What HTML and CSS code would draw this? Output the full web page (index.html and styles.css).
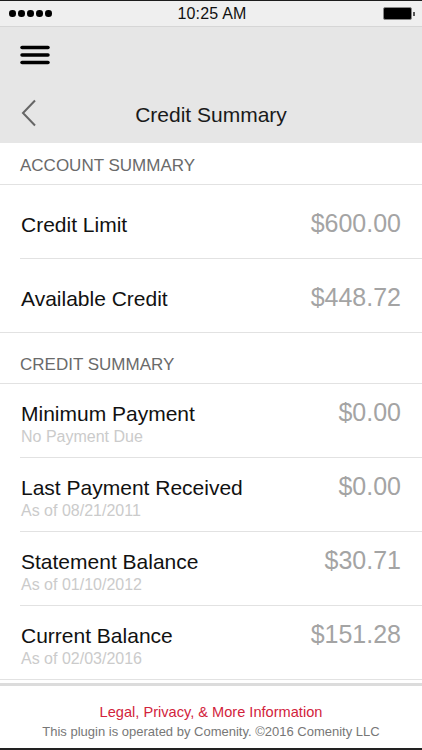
FILE: index.html
```html
<!DOCTYPE html>
<html lang="en">
<head>
    <meta charset="UTF-8">
    <meta name="viewport" content="width=device-width, initial-scale=1.0">
    <title>Credit Summary</title>
    <link rel="stylesheet" href="styles.css">
</head>
<body>
    <div class="status-bar">
        <div class="signal">
            <span class="dot"></span><span class="dot"></span><span class="dot"></span><span class="dot"></span><span class="dot"></span>
        </div>
        <div class="clock">10:25 AM</div>
        <div class="battery">
            <span class="battery-body"></span><span class="battery-nub"></span>
        </div>
    </div>

    <div class="nav">
        <div class="nav-menu">
            <svg class="menu-icon" width="30" height="22" viewBox="0 0 30 22">
                <line x1="2" y1="3.5" x2="28" y2="3.5" />
                <line x1="2" y1="11" x2="28" y2="11" />
                <line x1="2" y1="18.5" x2="28" y2="18.5" />
            </svg>
        </div>
        <div class="nav-title">
            <svg class="back-icon" width="16" height="28" viewBox="0 0 16 28">
                <polyline points="14,1.5 2,14 14,26.5" />
            </svg>
            <h1>Credit Summary</h1>
            <span></span>
        </div>
    </div>

    <div class="content">
        <div class="section-head">Account Summary</div>
        <div class="row">
            <div class="label">Credit Limit</div>
            <div class="value">$600.00</div>
        </div>
        <div class="row last">
            <div class="label">Available Credit</div>
            <div class="value">$448.72</div>
        </div>

        <div class="section-head spaced">Credit Summary</div>
        <div class="row tall">
            <div>
                <div class="label">Minimum Payment</div>
                <div class="sub">No Payment Due</div>
            </div>
            <div class="value">$0.00</div>
        </div>
        <div class="row tall">
            <div>
                <div class="label">Last Payment Received</div>
                <div class="sub">As of 08/21/2011</div>
            </div>
            <div class="value">$0.00</div>
        </div>
        <div class="row tall">
            <div>
                <div class="label">Statement Balance</div>
                <div class="sub">As of 01/10/2012</div>
            </div>
            <div class="value">$30.71</div>
        </div>
        <div class="row tall last">
            <div>
                <div class="label">Current Balance</div>
                <div class="sub">As of 02/03/2016</div>
            </div>
            <div class="value">$151.28</div>
        </div>
    </div>

    <div class="footer">
        <a class="legal" href="#">Legal, Privacy, &amp; More Information</a>
        <p>This plugin is operated by Comenity. ©2016 Comenity LLC</p>
    </div>
</body>
</html>
```

FILE: styles.css
```css
:root {
    --bar-color: #efefef;
    --nav-color: #e6e6e6;
    --line-color: #e2e2e2;
    --text-color: #111;
    --muted-color: #a4a4a4;
    --faint-color: #cbcbcb;
    --accent-color: #d2233c;
}

body {
    font-family: 'Liberation Sans', Arial, sans-serif;
    margin: 0;
    padding: 0;
    width: 422px;
    height: 750px;
    overflow: hidden;
    background-color: white;
    color: var(--text-color);
    border-top: 1px solid #1c1c1c;
    border-bottom: 2px solid #222;
    box-sizing: border-box;
    display: flex;
    flex-direction: column;
}

/* status bar */
.status-bar {
    height: 25px;
    background-color: var(--bar-color);
    border-bottom: 1px solid #d6d6d6;
    display: grid;
    grid-template-columns: 1fr auto 1fr;
    align-items: center;
    padding: 0 7px 0 9px;
}

.signal {
    display: flex;
    gap: 2.5px;
}

.dot {
    width: 6.5px;
    height: 6.5px;
    border-radius: 50%;
    background-color: #000;
}

.clock {
    font-size: 16px;
    color: #111;
    letter-spacing: 0.2px;
}

.battery {
    justify-self: end;
    display: flex;
    align-items: center;
}

.battery-body {
    width: 27px;
    height: 11px;
    background-color: #000;
    border: 1px solid #888;
    border-radius: 2px;
}

.battery-nub {
    width: 2px;
    height: 4px;
    background-color: #555;
    margin-left: 1px;
}

/* navigation */
.nav {
    background-color: var(--nav-color);
}

.nav-menu {
    height: 56px;
    display: flex;
    align-items: center;
    padding-left: 20px;
}

.menu-icon line {
    stroke: #000;
    stroke-width: 3.5;
    stroke-linecap: round;
}

.nav-title {
    height: 60px;
    display: grid;
    grid-template-columns: 1fr auto 1fr;
    align-items: center;
    padding-left: 21px;
}

.back-icon polyline {
    fill: none;
    stroke: #666;
    stroke-width: 2;
}

.nav-title h1 {
    margin: 4px 0 0;
    font-size: 21px;
    font-weight: normal;
    color: #1a1a1a;
    padding-right: 21px;
}

/* list */
.section-head {
    height: 42px;
    padding: 13px 20px 0;
    box-sizing: border-box;
    font-size: 17px;
    line-height: 20px;
    color: #6a6a6a;
    text-transform: uppercase;
    border-bottom: 1px solid var(--line-color);
}

.section-head.spaced {
    padding-top: 22px;
    height: 51px;
}

.row {
    height: 74px;
    box-sizing: border-box;
    margin-left: 20px;
    padding: 26px 21px 0 1px;
    display: flex;
    justify-content: space-between;
    align-items: baseline;
    border-bottom: 1px solid var(--line-color);
}

.row.tall {
    padding-top: 16px;
}

.row.last {
    margin-left: 0;
    padding-left: 21px;
}

.label {
    font-size: 21px;
    line-height: 24px;
}

.sub {
    font-size: 16px;
    line-height: 22px;
    color: var(--faint-color);
}

.value {
    font-size: 25px;
    line-height: 24px;
    color: var(--muted-color);
}

/* footer */
.footer {
    margin-top: 3px;
    border-top: 3px solid #dcdcdc;
    flex: 1;
    text-align: center;
    padding-top: 17px;
}

.legal {
    display: block;
    color: var(--accent-color);
    text-decoration: none;
    font-size: 14.6px;
    line-height: 18px;
}

.footer p {
    margin: 2px 0 0;
    font-size: 13px;
    line-height: 18px;
    color: #777;
}
```
